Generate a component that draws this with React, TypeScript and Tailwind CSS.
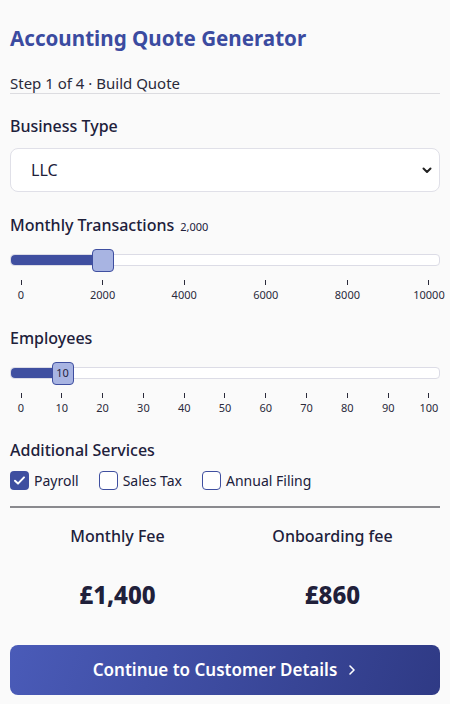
const TX_TICKS = ['0', '2000', '4000', '6000', '8000', '10000']
const EMP_TICKS = ['0', '10', '20', '30', '40', '50', '60', '70', '80', '90', '100']

const SERVICES = [
  { label: 'Payroll', checked: true },
  { label: 'Sales Tax', checked: false },
  { label: 'Annual Filing', checked: false },
]

function Slider({ pct, thumbLabel, ticks }: { pct: number; thumbLabel?: string; ticks: string[] }) {
  return (
    <div className="mt-[18px]">
      <div className="relative h-[12px] rounded-[4px] border border-[#dcdce6] bg-white">
        <div className="h-full rounded-l-[4px] bg-[#3f4fa0]" style={{ width: `${pct}%` }} />
        <div
          className="absolute top-[-6px] flex h-[23px] w-[22px] -translate-x-1/2 items-center justify-center rounded-[4px] border border-[#3f4fa0] bg-[#a8b4e2] text-[11px] text-[#1f2340]"
          style={{ left: `calc(11px + (100% - 23px) * ${pct / 100})` }}
        >
          {thumbLabel}
        </div>
      </div>
      <div className="mt-[14px] flex justify-between px-[11px]">
        {ticks.map((t) => (
          <div key={t} className="flex w-0 flex-col items-center">
            <div className="h-[5px] w-px bg-[#2a2a3a]" />
            <span className="mt-[4px] text-[11px] leading-none text-[#2a2a3a]">{t}</span>
          </div>
        ))}
      </div>
    </div>
  )
}

export default function App() {
  return (
    <div className="min-h-[704px] bg-[#fafafa] px-[10px] pt-[24px] font-['Noto_Sans',sans-serif] text-[#20203a]">
      <h1 className="text-[20.6px] font-bold leading-[28px] text-[#3b4ba0]">Accounting Quote Generator</h1>
      <div className="mt-[21px] border-b border-[#dcdce0] pb-[0px] text-[15px] leading-[20px] text-[#2a2a3a]">
        Step 1 of 4 · Build Quote
      </div>

      <div className="mt-[21px] text-[16px] font-medium leading-[22px]">Business Type</div>
      <div className="mt-[11px] flex h-[44px] items-center justify-between rounded-[8px] border border-[#e0e0e8] bg-white pl-[20px] pr-[6px]">
        <span className="text-[16px]">LLC</span>
        <svg width="12" height="12" viewBox="0 0 12 12">
          <path d="M2.5 4.5 6 8l3.5-3.5" fill="none" stroke="#222" strokeWidth="2" strokeLinecap="round" strokeLinejoin="round" />
        </svg>
      </div>

      <div className="mt-[22px] flex items-baseline gap-[6px]">
        <span className="text-[16px] font-medium leading-[22px]">Monthly Transactions</span>
        <span className="text-[11px]">2,000</span>
      </div>
      <Slider pct={20} ticks={TX_TICKS} />

      <div className="mt-[27px] text-[16px] font-medium leading-[22px]">Employees</div>
      <Slider pct={10} thumbLabel="10" ticks={EMP_TICKS} />

      <div className="mt-[26px] text-[16px] font-medium leading-[22px]">Additional Services</div>
      <div className="mt-[9px] flex items-center gap-[20px]">
        {SERVICES.map((s) => (
          <label key={s.label} className="flex items-center gap-[5px] text-[14px]">
            {s.checked ? (
              <span className="flex h-[19px] w-[19px] items-center justify-center rounded-[4px] bg-[#3f4fa0]">
                <svg width="13" height="13" viewBox="0 0 13 13">
                  <path d="M2 6.8 5 9.6 11 3.4" fill="none" stroke="#fff" strokeWidth="2" strokeLinecap="round" strokeLinejoin="round" />
                </svg>
              </span>
            ) : (
              <span className="h-[19px] w-[19px] rounded-[4px] border border-[#3f4fa0] bg-white" />
            )}
            {s.label}
          </label>
        ))}
      </div>
      <div className="mt-[15px] h-[2px] bg-[#8a8a8e]" />

      <div className="mt-[17px] grid grid-cols-2 text-center">
        <div>
          <div className="text-[16px] font-medium leading-[22px]">Monthly Fee</div>
          <div className="mt-[32px] text-[24px] font-extrabold leading-[32px]">£1,400</div>
        </div>
        <div>
          <div className="text-[16px] font-medium leading-[22px]">Onboarding fee</div>
          <div className="mt-[32px] text-[24px] font-extrabold leading-[32px]">£860</div>
        </div>
      </div>

      <button className="mt-[34px] flex h-[50px] w-full items-center justify-center gap-[10px] rounded-[8px] bg-[linear-gradient(110deg,#4a5bb8,#2f3a85)] text-[17px] font-semibold text-white">
        Continue to Customer Details
        <svg width="10" height="12" viewBox="0 0 10 12">
          <path d="M3 2l4 4-4 4" fill="none" stroke="#fff" strokeWidth="1.6" strokeLinecap="round" strokeLinejoin="round" />
        </svg>
      </button>
    </div>
  )
}
